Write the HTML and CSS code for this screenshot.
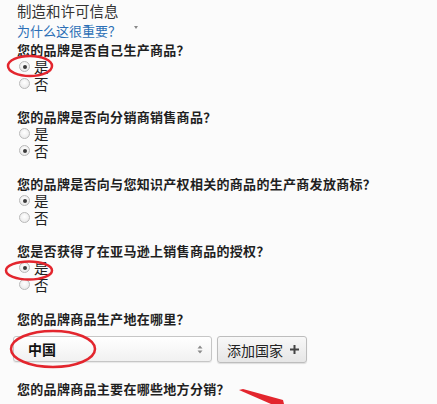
FILE: index.html
```html
<!DOCTYPE html>
<html lang="zh-CN">
<head>
<meta charset="utf-8">
<title>制造和许可信息</title>
<link rel="stylesheet" href="styles.css">
</head>
<body>
<div class="page">
  <div class="title">制造和许可信息</div>
  <div class="why"><a class="link" href="#">为什么这很重要？</a><span class="caret"></span></div>

  <div class="block first">
    <div class="q">您的品牌是否自己生产商品？</div>
    <div class="opt"><span class="radio on"></span><span class="lbl">是</span></div>
    <div class="opt"><span class="radio"></span><span class="lbl">否</span></div>
  </div>

  <div class="block">
    <div class="q">您的品牌是否向分销商销售商品？</div>
    <div class="opt"><span class="radio"></span><span class="lbl">是</span></div>
    <div class="opt"><span class="radio on"></span><span class="lbl">否</span></div>
  </div>

  <div class="block">
    <div class="q">您的品牌是否向与您知识产权相关的商品的生产商发放商标？</div>
    <div class="opt"><span class="radio on"></span><span class="lbl">是</span></div>
    <div class="opt"><span class="radio"></span><span class="lbl">否</span></div>
  </div>

  <div class="block">
    <div class="q">您是否获得了在亚马逊上销售商品的授权？</div>
    <div class="opt"><span class="radio on"></span><span class="lbl">是</span></div>
    <div class="opt"><span class="radio"></span><span class="lbl">否</span></div>
  </div>

  <div class="block loc">
    <div class="q">您的品牌商品生产地在哪里？</div>
    <div class="row">
      <div class="select"><span class="sel-text">中国</span>
        <svg class="updown" width="6" height="9" viewBox="0 0 6 9"><path d="M3 0.5 L5.5 3.5 H0.5 Z M3 8.5 L5.5 5.5 H0.5 Z" fill="#8a8a8a"/></svg>
      </div>
      <div class="btn"><span>添加国家</span>
        <svg class="plus" width="9" height="9" viewBox="0 0 9 9"><path d="M3.5 0 H5.5 V3.5 H9 V5.5 H5.5 V9 H3.5 V5.5 H0 V3.5 H3.5 Z" fill="#444"/></svg>
      </div>
    </div>
  </div>

  <div class="block last">
    <div class="q">您的品牌商品主要在哪些地方分销？</div>
  </div>
</div>

<svg class="marks" width="437" height="404" viewBox="0 0 437 404">
  <ellipse cx="30" cy="66" rx="22" ry="10" fill="none" stroke="#e3262e" stroke-width="2.5"/>
  <ellipse cx="29" cy="270.5" rx="23" ry="9" fill="none" stroke="#e3262e" stroke-width="2.5"/>
  <ellipse cx="53" cy="349" rx="42" ry="18" fill="none" stroke="#e3262e" stroke-width="2.5"/>
  <polygon points="239,390 243,389 283,400 284,404 271,404" fill="#e3262e"/>
</svg>
</body>
</html>
```

FILE: styles.css
```css
html, body {
  margin: 0;
  padding: 0;
  background: #fbfbfb;
}

body {
  width: 437px;
  height: 404px;
  overflow: hidden;
  position: relative;
  font-family: "Noto Sans CJK SC", "Liberation Sans", sans-serif;
  color: #222;
}

.page {
  padding: 1px 0 0 17px;
}

.title {
  font-size: 14.5px;
  line-height: 20px;
  color: #333;
}

.why {
  height: 20px;
  line-height: 20px;
  font-size: 13px;
  display: flex;
  align-items: center;
}

.link {
  color: #2b6fb6;
  text-decoration: none;
}

.caret {
  display: inline-block;
  margin-left: 13px;
  margin-top: -8px;
  width: 0;
  height: 0;
  border-left: 2.5px solid transparent;
  border-right: 2.5px solid transparent;
  border-top: 3px solid #888;
}

.block {
  margin-top: 17px;
}

.block.first {
  margin-top: 1px;
}

.block.loc {
  margin-top: 18px;
}

.block.last {
  margin-top: 18px;
}

.q {
  font-size: 13px;
  letter-spacing: 0.3px;
  font-weight: 700;
  line-height: 16px;
  color: #1f1f1f;
  white-space: nowrap;
}

.opt {
  height: 17px;
  display: flex;
  align-items: center;
  padding-left: 2px;
}

.radio {
  box-sizing: border-box;
  width: 11px;
  height: 11px;
  border-radius: 50%;
  border: 1px solid #b9b9b9;
  background: radial-gradient(circle at 50% 40%, #ffffff 0%, #e4e4e4 100%);
  display: flex;
  align-items: center;
  justify-content: center;
}

.radio.on::after {
  content: "";
  width: 4px;
  height: 4px;
  border-radius: 50%;
  background: #3a3a3a;
}

.lbl {
  margin-left: 4px;
  font-size: 14.5px;
  line-height: 17px;
  color: #222;
}

.row {
  display: flex;
  gap: 5px;
  margin-top: 9px;
  margin-left: -4px;
}

.select {
  box-sizing: border-box;
  width: 199px;
  height: 26px;
  border: 1px solid #c6c6c6;
  border-radius: 3px;
  background: linear-gradient(#ffffff, #f1f1f1);
  box-shadow: 0 1px 1px rgba(0, 0, 0, 0.08);
  display: flex;
  align-items: center;
  justify-content: space-between;
  padding: 0 8px 0 14px;
}

.sel-text {
  font-size: 14px;
  font-weight: 700;
  color: #111;
}

.btn {
  box-sizing: border-box;
  width: 90px;
  height: 27px;
  border: 1px solid #bdbdbd;
  border-radius: 3px;
  background: linear-gradient(#f8f8f8, #e6e6e6);
  box-shadow: 0 1px 1px rgba(0, 0, 0, 0.12);
  display: flex;
  align-items: center;
  padding-left: 9px;
  gap: 7px;
  font-size: 14px;
  color: #222;
}

.marks {
  position: absolute;
  left: 0;
  top: 0;
  pointer-events: none;
}
```
